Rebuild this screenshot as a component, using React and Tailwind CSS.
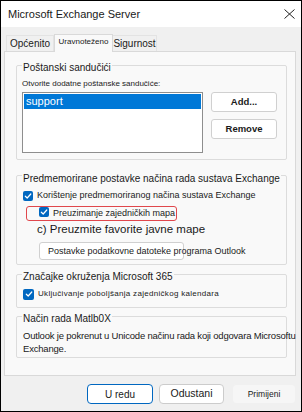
import React from "react";

function Check({ className = "" }) {
  return (
    <span className={"flex items-center justify-center w-[10px] h-[10px] rounded-[2px] bg-[#0067c0] shrink-0 " + className}>
      <svg width="8" height="8" viewBox="0 0 8 8">
        <path d="M1.3 4.2 L3.2 6 L6.8 2" fill="none" stroke="white" strokeWidth="1.2" strokeLinecap="round" strokeLinejoin="round" />
      </svg>
    </span>
  );
}

function Group({ label, className = "", labelClass = "-mt-[4px]", children }) {
  return (
    <div className={"border border-[#dcdcdc] rounded-[2px] flex flex-col " + className}>
      <div className={"ml-[5px] px-[1px] w-fit bg-[#f9f9f9] text-[10px] leading-[12px] " + labelClass}>{label}</div>
      {children}
    </div>
  );
}

export default function App() {
  return (
    <div className="w-[302px] h-[412px] border border-black bg-[#f0f0f0] flex flex-col overflow-hidden text-[#1a1a1a] font-['Liberation_Sans',Arial,sans-serif]">
      {/* title bar */}
      <div className="h-[26px] shrink-0 bg-white flex items-center justify-between pl-[7px] pr-[6px]">
        <span className="text-[11px] leading-[14px]">Microsoft Exchange Server</span>
        <svg width="11" height="10" viewBox="0 0 11 10">
          <path d="M0.5 0.5 L10.5 9.5 M10.5 0.5 L0.5 9.5" stroke="#222" strokeWidth="1" fill="none" />
        </svg>
      </div>

      <div className="flex-1 flex flex-col pl-[3px] pr-[5px]">
        {/* tabs */}
        <div className="h-[24px] flex items-end pl-[2px]">
          <div className="w-[48px] h-[16px] border border-b-0 border-[#e3e3e3] flex items-center justify-center text-[10px] leading-[12px]">Općenito</div>
          <div className="w-[59px] h-[18px] -mb-px relative z-10 bg-[#f9f9f9] border border-b-0 border-[#d9d9d9] flex justify-center pt-[2px] text-[8px] leading-[10px]">Uravnoteženo</div>
          <div className="w-[44px] h-[16px] border border-b-0 border-l-0 border-[#e3e3e3] flex items-center justify-center text-[10px] leading-[12px]">Sigurnost</div>
        </div>

        {/* panel */}
        <div className="h-[325px] shrink-0 border border-[#d9d9d9] bg-[#f9f9f9] pl-[11px] pr-[8px] pt-[13px] flex flex-col">
          {/* group 1 */}
          <Group label="Poštanski sandučići" className="h-[95px]">
            <div className="ml-[5px] mt-[5px] text-[8px] leading-[10px]">Otvorite dodatne poštanske sandučiće:</div>
            <div className="flex mt-[3px] ml-[5px]">
              <div className="w-[181px] h-[61px] border border-[#8e8e8e] bg-white p-px">
                <div className="h-[15px] bg-[#0078d7] text-white text-[11px] leading-[15px] pl-[2px]">support</div>
              </div>
              <div className="ml-[8px] flex flex-col gap-[7px]">
                <div className="w-[66px] h-[20px] bg-white border border-[#d0d0d0] rounded-[3px] flex items-center justify-center text-[9.5px] font-semibold">Add...</div>
                <div className="w-[66px] h-[20px] bg-white border border-[#d0d0d0] rounded-[3px] flex items-center justify-center text-[9.5px] font-semibold">Remove</div>
              </div>
            </div>
          </Group>

          {/* group 2 */}
          <Group label="Predmemorirane postavke načina rada sustava Exchange" className="h-[90px] mt-[15px]" labelClass="-mt-[3px] text-[9px]">
            <div className="mt-[5px] ml-[6px] flex items-center gap-[4px] h-[12px] text-[9px]">
              <Check />
              <span className="whitespace-nowrap">Korištenje predmemoriranog načina sustava Exchange</span>
            </div>
            <div className="mt-[4px] ml-[9px] w-[151px] h-[15px] border border-[#e0474c] rounded-[3px] flex items-start pl-[12px] pt-0">
              <Check />
              <span className="ml-[4px] text-[9px] leading-[12px] whitespace-nowrap">Preuzimanje zajedničkih mapa</span>
            </div>
            <div className="ml-[20px] text-[11.5px] leading-[14px] mt-px whitespace-nowrap">c) Preuzmite favorite javne mape</div>
            <div className="mt-[6px] ml-[22px] w-[145px] min-w-0 max-w-[145px] shrink-0 h-[18px] bg-white border border-[#d0d0d0] rounded-[3px] pl-[8px] text-[9px] leading-[16px] whitespace-nowrap">
              <span>Postavke podatkovne datoteke programa Outlook</span>
            </div>
          </Group>

          {/* group 3 */}
          <Group label="Značajke okruženja Microsoft 365" className="h-[34px] mt-[9px]">
            <div className="mt-[5px] ml-[6px] flex items-center gap-[4px] h-[12px]">
              <Check className="w-[11px] h-[11px]" />
              <span className="text-[8px] tracking-[0.3px] whitespace-nowrap">Uključivanje poboljšanja zajedničkog kalendara</span>
            </div>
          </Group>

          {/* group 4 */}
          <Group label="Način rada Matlb0X" className="h-[42px] mt-[8px]">
            <div className="mt-[4px] pl-[6px] text-[9.5px] leading-[13px] tracking-[-0.2px] whitespace-nowrap">
              Outlook je pokrenut u Unicode načinu rada koji odgovara Microsoftu
              <br />
              Exchange.
            </div>
          </Group>
        </div>

        {/* buttons */}
        <div className="flex mt-[8px] h-[20px]">
          <div className="ml-[83px] w-[66px] h-[20px] bg-white border border-[#0067c0] rounded-[4px] flex items-center justify-center text-[10px]">U redu</div>
          <div className="ml-[6px] w-[65px] h-[20px] bg-white border border-[#cccccc] rounded-[4px] flex items-center justify-center text-[10.5px]">Odustani</div>
          <div className="ml-[8px] w-[64px] h-[20px] bg-[#f6f6f6] border border-[#f0f0f0] rounded-[4px] flex items-center justify-center text-[8.5px] font-medium">Primijeni</div>
        </div>
      </div>
    </div>
  );
}
